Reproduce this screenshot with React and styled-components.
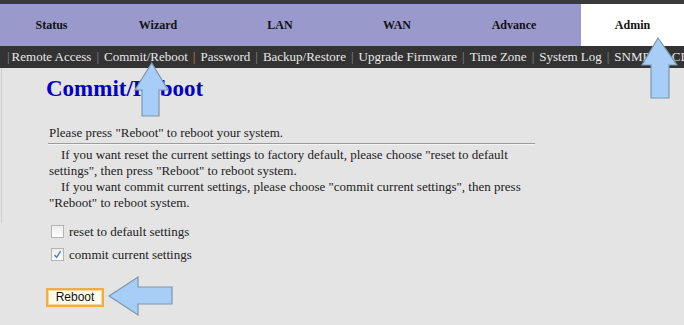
import React from 'react';
import styled, { createGlobalStyle } from 'styled-components';

const GlobalStyle = createGlobalStyle`
    html, body {
        margin: 0;
        padding: 0;
        background: #e4e4e4;
    }
    * {
        box-sizing: border-box;
    }
`;

const Page = styled.div`
    position: relative;
    width: 684px;
    height: 325px;
    overflow: hidden;
    background: #e4e4e4;
    font-family: "Liberation Serif", "Times New Roman", serif;
    color: #222;
`;

const TopStrip = styled.div`
    height: 4px;
    background: #3a3a3a;
`;

const MainNav = styled.nav`
    display: grid;
    grid-template-columns: 103px 110px 134px 100px 134px 103px;
    height: 42px;
    background: #9999cc;
`;

const NavItem = styled.div`
    display: flex;
    align-items: center;
    justify-content: center;
    font-size: 12px;
    font-weight: bold;
    color: #111;
    background: ${p => (p.$active ? '#ffffff' : 'transparent')};
`;

const SubNav = styled.div`
    display: flex;
    align-items: center;
    height: 22px;
    padding-left: 7px;
    background: #333333;
    color: #e8e8e8;
    font-size: 13px;
    white-space: nowrap;
    overflow: hidden;
`;

const Sep = styled.span`
    color: ${p => (p.$accent ? '#d08a3a' : '#8a8a8a')};
    padding: ${p => (p.$first ? '0 2px 0 0' : '0 5px')};
`;

const Frame = styled.section`
    margin-left: 1px;
    border-left: 1px solid #cdcdcd;
    padding: 7px 0 12px 45px;
`;

const Title = styled.h1`
    margin: 0 0 22px -1px;
    font-size: 23px;
    line-height: 28px;
    font-weight: bold;
    color: #0000cc;
`;

const Body = styled.div`
    width: 488px;
    font-size: 13px;
    line-height: 16px;
`;

const Lead = styled.p`
    margin: 0 0 0 2px;
`;

const Rule = styled.hr`
    margin: 2px 0 2px 1px;
    border: 0;
    border-top: 1px solid #9c9c9c;
    border-bottom: 1px solid #f4f4f4;
`;

const Para = styled.p`
    margin: 0 0 0 2px;
    text-indent: 12px;
`;

const Options = styled.div`
    display: flex;
    flex-direction: column;
    gap: 10px;
    padding: 2px 0 0 51px;
    font-size: 13px;
`;

const OptionRow = styled.label`
    display: flex;
    align-items: center;
    gap: 5px;
    height: 13px;
`;

const Box = styled.span`
    display: inline-flex;
    align-items: center;
    justify-content: center;
    width: 13px;
    height: 13px;
    border: 1px solid #b4b4b4;
    background: linear-gradient(#ececec, #ffffff);
`;

const Actions = styled.div`
    padding: 26px 0 0 46px;
`;

const RebootButton = styled.button`
    width: 58px;
    height: 19px;
    padding: 0;
    border: 2px solid #f1ad45;
    outline: 1px solid #f7d79c;
    outline-offset: -3px;
    background: #fffbea;
    font-family: "Liberation Sans", Arial, sans-serif;
    font-size: 12px;
    color: #111;
`;

const Pointer = styled.svg`
    position: absolute;
    left: ${p => p.$x}px;
    top: ${p => p.$y}px;
    overflow: visible;
`;

const ARROW_FILL = '#a7cef6';
const ARROW_LINE = '#7f95ae';

const navItems = ['Status', 'Wizard', 'LAN', 'WAN', 'Advance', 'Admin'];
const subItems = ['Remote Access', 'Commit/Reboot', 'Password', 'Backup/Restore', 'Upgrade Firmware', 'Time Zone', 'System Log', 'SNMP', 'ACL'];

const Check = () => (
    <svg width="9" height="9" viewBox="0 0 9 9">
        <path d="M1.5 5 L3.6 7.3 L7.6 1.2" fill="none" stroke="#3d86cc" strokeWidth="1.4" />
    </svg>
);

const App = () => {
    return (
        <Page>
            <GlobalStyle />
            <TopStrip />
            <MainNav>
                {navItems.map(n => (
                    <NavItem key={n} $active={n === 'Admin'}>{n}</NavItem>
                ))}
            </MainNav>
            <SubNav>
                <Sep $first>|</Sep>
                {subItems.map((s, i) => (
                    <React.Fragment key={s}>
                        <span>{s}</span>
                        {i < subItems.length - 1 && <Sep $accent={i === 1}>|</Sep>}
                    </React.Fragment>
                ))}
            </SubNav>

            <Frame>
                <Title>Commit/Reboot</Title>
                <Body>
                    <Lead>Please press "Reboot" to reboot your system.</Lead>
                    <Rule />
                    <Para>If you want reset the current settings to factory default, please choose "reset to default settings", then press "Reboot" to reboot system.</Para>
                    <Para>If you want commit current settings, please choose "commit current settings", then press "Reboot" to reboot system.</Para>
                </Body>
            </Frame>

            <Options>
                <OptionRow>
                    <Box />
                    reset to default settings
                </OptionRow>
                <OptionRow>
                    <Box><Check /></Box>
                    commit current settings
                </OptionRow>
            </Options>

            <Actions>
                <RebootButton>Reboot</RebootButton>
            </Actions>

            <Pointer $x={133} $y={61} width="38" height="57">
                <polygon points="18.7,2 2,29 9,29 9,55 26,55 26,29 35,29" fill={ARROW_FILL} stroke={ARROW_LINE} strokeWidth="1.2" />
            </Pointer>
            <Pointer $x={640} $y={36} width="40" height="64">
                <polygon points="18,2 2,29 11,29 11,62 29,62 29,29 37,29" fill={ARROW_FILL} stroke={ARROW_LINE} strokeWidth="1.2" />
            </Pointer>
            <Pointer $x={107} $y={275} width="68" height="42">
                <polygon points="2,21 31,2 31,12 65,12 65,29 31,29 31,40" fill={ARROW_FILL} stroke={ARROW_LINE} strokeWidth="1.2" />
            </Pointer>
        </Page>
    );
};

export default App;
